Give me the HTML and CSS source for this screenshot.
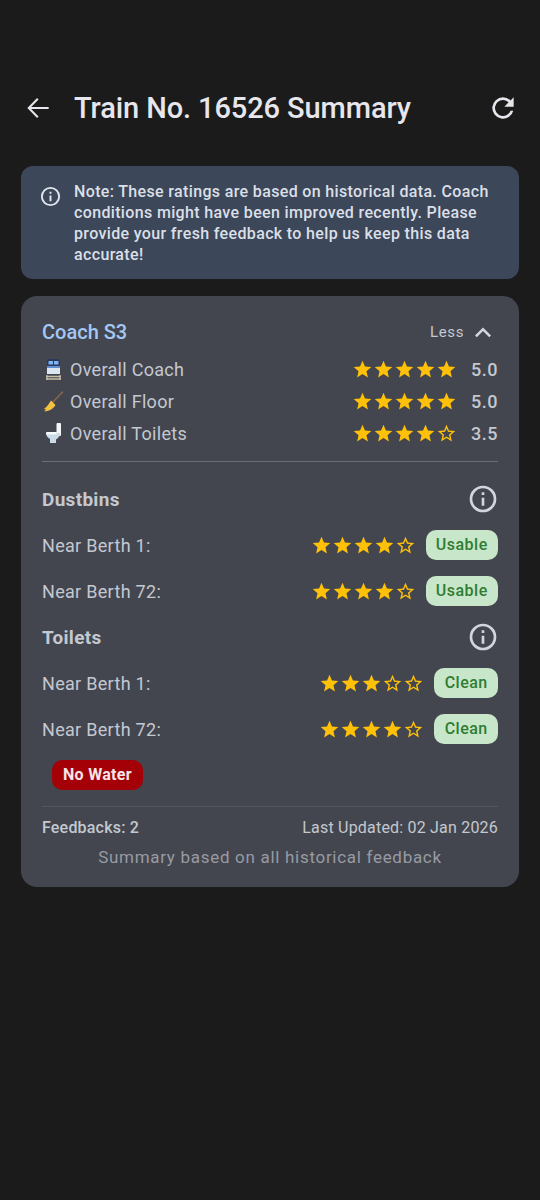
FILE: index.html
```html
<!DOCTYPE html>
<html lang="en">
<head>
    <meta charset="UTF-8">
    <title>Train Summary</title>
    <link rel="stylesheet" href="styles.css">
</head>
<body>
    <svg class="defs" width="0" height="0">
        <symbol id="star" viewBox="0 0 24 24"><path d="M12 17.270L18.180 21l-1.640-7.030L22 9.240l-7.190-.61L12 2 9.190 8.630 2 9.240l5.460 4.730L5.820 21z"/></symbol>
        <symbol id="star-o" viewBox="0 0 24 24"><path d="M22 9.240l-7.190-.62L12 2 9.190 8.630 2 9.240l5.460 4.730L5.820 21 12 17.270 18.180 21l-1.630-7.030L22 9.240zM12 15.400l-3.760 2.270 1-4.280-3.320-2.880 4.380-.38L12 6.100l1.710 4.040 4.380.38-3.320 2.880 1 4.280L12 15.400z"/></symbol>
        <symbol id="info" viewBox="0 0 24 24"><path d="M12 2a10 10 0 1 0 0 20 10 10 0 0 0 0-20zm0 18a8 8 0 1 1 0-16 8 8 0 0 1 0 16zm-1-9h2v6h-2zm0-4h2v2h-2z"/></symbol>
    </svg>

    <header class="topbar">
        <svg class="back" viewBox="0 0 24 24"><path d="M20 11.200H6.900l5.500-5.600-1.100-1.100L4 12l7.300 7.500 1.100-1.100-5.500-5.600H20z"/></svg>
        <h1>Train No. 16526 Summary</h1>
        <svg class="refresh" viewBox="0 0 24 24"><path d="M17.650 6.350A8 8 0 0 0 12 4a8 8 0 1 0 7.730 10h-2.080A6 6 0 1 1 12 6c1.660 0 3.140.69 4.220 1.780L13 11h7V4z"/></svg>
    </header>

    <div class="note">
        <svg class="note-icon" viewBox="0 0 24 24"><use href="#info"/></svg>
        <p>Note: These ratings are based on historical data. Coach conditions might have been improved recently. Please provide your fresh feedback to help us keep this data accurate!</p>
    </div>

    <section class="card">
        <div class="coach-head">
            <span class="coach-name">Coach S3</span>
            <span class="less">Less
                <svg viewBox="0 0 24 24"><path d="M12 7.500l-8 8 1.800 1.800 6.200-6.200 6.200 6.200 1.800-1.800z"/></svg>
            </span>
        </div>

        <div class="overall">
            <svg class="emoji" viewBox="0 0 20 24">
                <rect x="4" y="2" width="13" height="10" rx="2.500" fill="#26395c"/>
                <rect x="5.500" y="4" width="4.500" height="3.500" fill="#7db4f2"/>
                <rect x="11" y="4" width="4.500" height="3.500" fill="#7db4f2"/>
                <rect x="4" y="10" width="13" height="7" fill="#dbe6f0"/>
                <rect x="4" y="9" width="13" height="2" fill="#5f8fd0"/>
                <path d="M4 18v5M17 18v5" stroke="#a8a89c" stroke-width="1.500"/>
                <path d="M3 19.500h15M3 22h15" stroke="#c9bfa6" stroke-width="1.300"/>
            </svg>
            <span class="overall-label">Overall Coach</span>
            <span class="stars">
                <svg><use href="#star"/></svg><svg><use href="#star"/></svg><svg><use href="#star"/></svg><svg><use href="#star"/></svg><svg><use href="#star"/></svg>
            </span>
            <span class="score">5.0</span>
        </div>
        <div class="overall">
            <svg class="emoji" viewBox="0 0 20 24">
                <path d="M20 2.500L9 14" stroke="#8f6a4a" stroke-width="1.300"/>
                <path d="M8 11.500l4.500 4.500c-2 3.500-6 6-11 6.500L3 20l-2.500 .5c3-2.500 5.500-5.500 7.500-9z" fill="#f2c23e"/>
            </svg>
            <span class="overall-label">Overall Floor</span>
            <span class="stars">
                <svg><use href="#star"/></svg><svg><use href="#star"/></svg><svg><use href="#star"/></svg><svg><use href="#star"/></svg><svg><use href="#star"/></svg>
            </span>
            <span class="score">5.0</span>
        </div>
        <div class="overall">
            <svg class="emoji" viewBox="0 0 20 24">
                <rect x="13.500" y="2" width="4.500" height="13" rx="1" fill="#f4f6f8"/>
                <path d="M3 12h14c0 3-1.500 5-4 6.500V22H7v-4c-2.500-1.500-4-3.500-4-6z" fill="#c9dbe6"/>
                <rect x="3" y="11" width="11" height="2.500" rx="1" fill="#f7f9fb"/>
            </svg>
            <span class="overall-label">Overall Toilets</span>
            <span class="stars">
                <svg><use href="#star"/></svg><svg><use href="#star"/></svg><svg><use href="#star"/></svg><svg><use href="#star"/></svg><svg><use href="#star-o"/></svg>
            </span>
            <span class="score">3.5</span>
        </div>

        <hr class="divider">

        <div class="section-head">
            <span>Dustbins</span>
            <svg class="section-info" viewBox="0 0 24 24"><use href="#info"/></svg>
        </div>
        <div class="item">
            <span class="item-label">Near Berth 1:</span>
            <span class="stars">
                <svg><use href="#star"/></svg><svg><use href="#star"/></svg><svg><use href="#star"/></svg><svg><use href="#star"/></svg><svg><use href="#star-o"/></svg>
            </span>
            <span class="chip">Usable</span>
        </div>
        <div class="item">
            <span class="item-label">Near Berth 72:</span>
            <span class="stars">
                <svg><use href="#star"/></svg><svg><use href="#star"/></svg><svg><use href="#star"/></svg><svg><use href="#star"/></svg><svg><use href="#star-o"/></svg>
            </span>
            <span class="chip">Usable</span>
        </div>

        <div class="section-head toilets">
            <span>Toilets</span>
            <svg class="section-info" viewBox="0 0 24 24"><use href="#info"/></svg>
        </div>
        <div class="item">
            <span class="item-label">Near Berth 1:</span>
            <span class="stars">
                <svg><use href="#star"/></svg><svg><use href="#star"/></svg><svg><use href="#star"/></svg><svg><use href="#star-o"/></svg><svg><use href="#star-o"/></svg>
            </span>
            <span class="chip">Clean</span>
        </div>
        <div class="item">
            <span class="item-label">Near Berth 72:</span>
            <span class="stars">
                <svg><use href="#star"/></svg><svg><use href="#star"/></svg><svg><use href="#star"/></svg><svg><use href="#star"/></svg><svg><use href="#star-o"/></svg>
            </span>
            <span class="chip">Clean</span>
        </div>

        <div class="alert-row"><span class="alert">No Water</span></div>

        <div class="foot">
            <span class="feedbacks">Feedbacks: 2</span>
            <span class="updated">Last Updated: 02 Jan 2026</span>
        </div>
        <p class="based">Summary based on all historical feedback</p>
    </section>
</body>
</html>
```

FILE: styles.css
```css
html,body{
    margin: 0;
    padding: 0;
    background-color: #1b1b1c;
}
body{
    width: 540px;
    height: 1200px;
    overflow: hidden;
    font-family: Roboto, "Liberation Sans", sans-serif;
    color: #c4c8d0;
}
.defs{
    display: block;
    height: 0;
}
.topbar{
    display: flex;
    align-items: center;
    height: 44px;
    padding: 86px 21px 0 22px;
}
.topbar h1{
    flex: 1;
    margin: 0 0 0 20px;
    font-size: 29px;
    font-weight: 500;
    letter-spacing: -.1px;
    color: #e6e6ec;
}
.back{
    width: 32px;
    height: 32px;
    fill: #e6e6ec;
}
.refresh{
    width: 32px;
    height: 32px;
    fill: #e6e6ec;
}
.note{
    display: flex;
    margin: 36px 21px 0;
    padding: 15px 20px 14px 18px;
    background-color: #3c4859;
    border-radius: 12px;
}
.note-icon{
    flex: none;
    width: 23px;
    height: 23px;
    margin: 4px 12px 0 0;
    fill: #e3e6ee;
}
.note p{
    margin: 0;
    font-size: 16px;
    line-height: 21px;
    font-weight: 500;
    letter-spacing: .35px;
    color: #dbdfe7;
}
.card{
    margin: 17px 21px 0;
    padding: 22px 21px 20px;
    background-color: #43464f;
    border-radius: 16px;
}
.coach-head{
    display: flex;
    justify-content: space-between;
    align-items: center;
    height: 28px;
}
.coach-name{
    font-size: 20px;
    font-weight: 500;
    color: #a3c8f5;
}
.less{
    display: flex;
    align-items: center;
    gap: 7px;
    margin-right: 3px;
    font-size: 15px;
    letter-spacing: .6px;
}
.less svg{
    width: 24px;
    height: 24px;
    fill: #d4d7de;
}
.overall{
    display: flex;
    align-items: center;
    height: 32px;
    font-size: 18px;
    letter-spacing: .3px;
}
.coach-head + .overall{
    margin-top: 7px;
}
.emoji{
    width: 20px;
    height: 24px;
    margin: 0 7px 0 1px;
}
.overall-label{
    flex: 1;
}
.stars{
    display: flex;
}
.stars svg{
    width: 21px;
    height: 21px;
    fill: #ffc107;
}
.score{
    width: 27px;
    margin-left: 14px;
    font-weight: 500;
    letter-spacing: .5px;
    text-align: right;
}
.divider{
    height: 1px;
    margin: 12px 0 0;
    border: 0;
    background-color: #6a6d76;
}
.section-head{
    display: flex;
    justify-content: space-between;
    align-items: center;
    height: 36px;
    margin-top: 19px;
    font-size: 19px;
    font-weight: 700;
    letter-spacing: .3px;
}
.section-head.toilets{
    margin-top: 13px;
}
.section-info{
    width: 32px;
    height: 32px;
    margin-right: -1px;
    fill: #d2d5dc;
}
.item{
    display: flex;
    align-items: center;
    height: 30px;
    font-size: 18px;
    letter-spacing: .3px;
}
.section-head + .item{
    margin-top: 13px;
}
.item + .item{
    margin-top: 16px;
}
.item-label{
    flex: 1;
}
.item .stars{
    margin-right: 10px;
}
.chip{
    padding: 0 10.25px;
    line-height: 30px;
    font-size: 16px;
    font-weight: 500;
    letter-spacing: .5px;
    color: #2e7d32;
    background-color: #c8e6c9;
    border-radius: 10px;
}
.alert-row{
    margin-top: 16px;
    padding-left: 10px;
}
.alert{
    display: block;
    width: fit-content;
    padding: 0 11px;
    line-height: 30px;
    font-size: 16px;
    font-weight: 700;
    letter-spacing: .3px;
    color: #f4e6e6;
    background-color: #a30008;
    border-radius: 10px;
}
.foot{
    display: flex;
    justify-content: space-between;
    align-items: center;
    margin-top: 16px;
    padding-top: 11px;
    border-top: 1px solid #53565f;
    font-size: 16px;
    letter-spacing: .2px;
}
.feedbacks{
    font-weight: 500;
}
.based{
    margin: 10px 0 0;
    font-size: 17px;
    letter-spacing: .7px;
    text-align: center;
    color: #989ba3;
}
```
